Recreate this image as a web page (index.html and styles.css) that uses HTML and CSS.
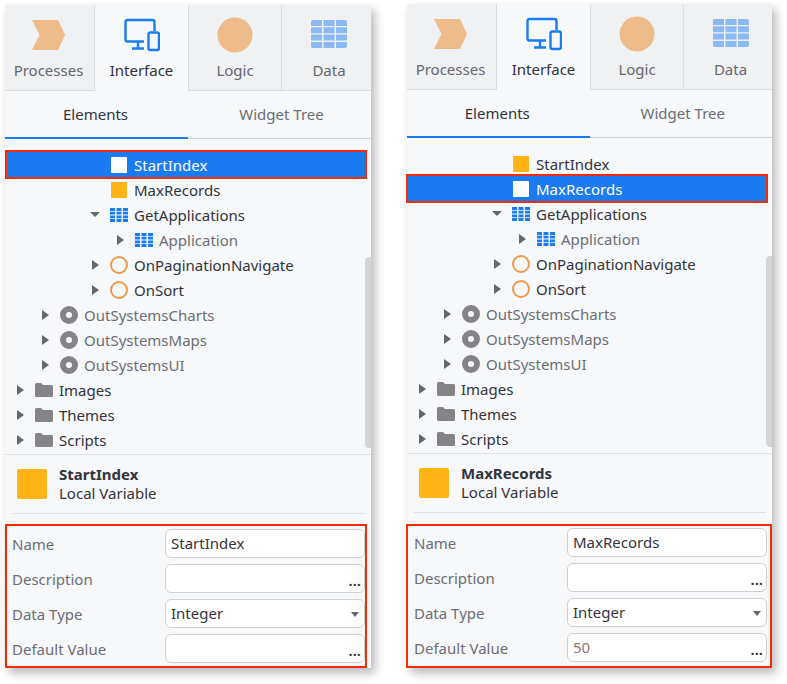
FILE: index.html
```html
<!DOCTYPE html>
<html>
<head>
<meta name="viewport" content="width=device-width, initial-scale=1">
<link rel="stylesheet" href="styles.css">
</head>
<body>

<svg class="defs" width="0" height="0">
  <symbol id="table" viewBox="0 0 18 14">
    <path d="M0 0h5v2.900H0zM6.500 0h5v2.900h-5zM13 0h5v2.900h-5zM0 3.700h5v2.900H0zM6.500 3.700h5v2.900h-5zM13 3.700h5v2.900h-5zM0 7.400h5v2.900H0zM6.500 7.400h5v2.900h-5zM13 7.400h5v2.900h-5zM0 11.100h5V14H0zM6.500 11.100h5V14h-5zM13 11.100h5V14h-5z"/>
  </symbol>
  <symbol id="folder" viewBox="0 0 18 14">
    <path d="M0 1.500Q0 0 1.500 0h4.500l2 2h8.500Q18 2 18 3.500v9Q18 14 16.500 14h-15Q0 14 0 12.500z"/>
  </symbol>
</svg>

<div class="panel panel-left">
  <div class="top-tabs">
    <div class="top-tab tab-first">
      <svg class="tab-icon" viewBox="0 0 36 32"><path d="M1 1h26l7 15-7 15H1l7.500-15z" fill="#eebb8b"/></svg>
      <span>Processes</span>
    </div>
    <div class="top-tab active">
      <svg class="tab-icon" viewBox="0 0 36 32" fill="none" stroke="#1a7cf0" stroke-width="2.400"><path d="M20 22.500H3.500q-2 0-2-2V3q0-2 2-2h25q2 0 2 2v9"/><path d="M14 23v6M8 29.500h12" /><rect x="24.500" y="13.500" width="10.500" height="17.500" rx="2"/></svg>
      <span>Interface</span>
    </div>
    <div class="top-tab">
      <svg class="tab-icon" viewBox="0 0 36 36"><circle cx="18" cy="18" r="17.500" fill="#eebb8b"/></svg>
      <span>Logic</span>
    </div>
    <div class="top-tab tab-last">
      <svg class="tab-icon" viewBox="0 0 36 30" fill="#8ab9f3"><path d="M0 2q0-2 2-2h9v6H0zM12.500 0h11v6h-11zM25 0h9q2 0 2 2v4H25zM0 7.300h11v6H0zM12.500 7.300h11v6h-11zM25 7.300h11v6H25zM0 14.600h11v6H0zM12.500 14.600h11v6h-11zM25 14.600h11v6H25zM0 22h11v6H2q-2 0-2-2zM12.500 22h11v6h-11zM25 22h11v4q0 2-2 2h-9z"/></svg>
      <span>Data</span>
    </div>
  </div>
  <div class="sub-tabs">
    <div class="sub-tab active">Elements</div>
    <div class="sub-tab">Widget Tree</div>
  </div>
  <div class="tree">
    <div class="row lvl3 selected"><i class="arrow"></i><i class="var white"></i><span>StartIndex</span></div>
    <div class="row lvl3"><i class="arrow"></i><i class="var"></i><span>MaxRecords</span></div>
    <div class="row lvl3"><i class="arrow down"></i><svg class="ico blue"><use href="#table"/></svg><span>GetApplications</span></div>
    <div class="row lvl4 dim"><i class="arrow right"></i><svg class="ico blue"><use href="#table"/></svg><span>Application</span></div>
    <div class="row lvl3"><i class="arrow right"></i><i class="ring"></i><span>OnPaginationNavigate</span></div>
    <div class="row lvl3"><i class="arrow right"></i><i class="ring"></i><span>OnSort</span></div>
    <div class="row lvl1 dim"><i class="arrow right"></i><i class="dot"></i><span>OutSystemsCharts</span></div>
    <div class="row lvl1 dim"><i class="arrow right"></i><i class="dot"></i><span>OutSystemsMaps</span></div>
    <div class="row lvl1 dim"><i class="arrow right"></i><i class="dot"></i><span>OutSystemsUI</span></div>
    <div class="row lvl0"><i class="arrow right"></i><svg class="ico grey"><use href="#folder"/></svg><span>Images</span></div>
    <div class="row lvl0"><i class="arrow right"></i><svg class="ico grey"><use href="#folder"/></svg><span>Themes</span></div>
    <div class="row lvl0"><i class="arrow right"></i><svg class="ico grey"><use href="#folder"/></svg><span>Scripts</span></div>
    <div class="scrollbar"></div>
  </div>
  <div class="summary">
    <div class="summary-swatch"></div>
    <div>
      <div class="summary-name">StartIndex</div>
      <div class="summary-type">Local Variable</div>
    </div>
  </div>
  <div class="props">
    <div class="prop"><label>Name</label><div class="field">StartIndex</div></div>
    <div class="prop"><label>Description</label><div class="field"><b class="more">...</b></div></div>
    <div class="prop"><label>Data Type</label><div class="field">Integer<i class="caret"></i></div></div>
    <div class="prop"><label>Default Value</label><div class="field"><b class="more">...</b></div></div>
  </div>
</div>

<div class="panel panel-right">
  <div class="top-tabs">
    <div class="top-tab tab-first">
      <svg class="tab-icon" viewBox="0 0 36 32"><path d="M1 1h26l7 15-7 15H1l7.500-15z" fill="#eebb8b"/></svg>
      <span>Processes</span>
    </div>
    <div class="top-tab active">
      <svg class="tab-icon" viewBox="0 0 36 32" fill="none" stroke="#1a7cf0" stroke-width="2.400"><path d="M20 22.500H3.500q-2 0-2-2V3q0-2 2-2h25q2 0 2 2v9"/><path d="M14 23v6M8 29.500h12" /><rect x="24.500" y="13.500" width="10.500" height="17.500" rx="2"/></svg>
      <span>Interface</span>
    </div>
    <div class="top-tab">
      <svg class="tab-icon" viewBox="0 0 36 36"><circle cx="18" cy="18" r="17.500" fill="#eebb8b"/></svg>
      <span>Logic</span>
    </div>
    <div class="top-tab tab-last">
      <svg class="tab-icon" viewBox="0 0 36 30" fill="#8ab9f3"><path d="M0 2q0-2 2-2h9v6H0zM12.500 0h11v6h-11zM25 0h9q2 0 2 2v4H25zM0 7.300h11v6H0zM12.500 7.300h11v6h-11zM25 7.300h11v6H25zM0 14.600h11v6H0zM12.500 14.600h11v6h-11zM25 14.600h11v6H25zM0 22h11v6H2q-2 0-2-2zM12.500 22h11v6h-11zM25 22h11v4q0 2-2 2h-9z"/></svg>
      <span>Data</span>
    </div>
  </div>
  <div class="sub-tabs">
    <div class="sub-tab active">Elements</div>
    <div class="sub-tab">Widget Tree</div>
  </div>
  <div class="tree">
    <div class="row lvl3"><i class="arrow"></i><i class="var"></i><span>StartIndex</span></div>
    <div class="row lvl3 selected"><i class="arrow"></i><i class="var white"></i><span>MaxRecords</span></div>
    <div class="row lvl3"><i class="arrow down"></i><svg class="ico blue"><use href="#table"/></svg><span>GetApplications</span></div>
    <div class="row lvl4 dim"><i class="arrow right"></i><svg class="ico blue"><use href="#table"/></svg><span>Application</span></div>
    <div class="row lvl3"><i class="arrow right"></i><i class="ring"></i><span>OnPaginationNavigate</span></div>
    <div class="row lvl3"><i class="arrow right"></i><i class="ring"></i><span>OnSort</span></div>
    <div class="row lvl1 dim"><i class="arrow right"></i><i class="dot"></i><span>OutSystemsCharts</span></div>
    <div class="row lvl1 dim"><i class="arrow right"></i><i class="dot"></i><span>OutSystemsMaps</span></div>
    <div class="row lvl1 dim"><i class="arrow right"></i><i class="dot"></i><span>OutSystemsUI</span></div>
    <div class="row lvl0"><i class="arrow right"></i><svg class="ico grey"><use href="#folder"/></svg><span>Images</span></div>
    <div class="row lvl0"><i class="arrow right"></i><svg class="ico grey"><use href="#folder"/></svg><span>Themes</span></div>
    <div class="row lvl0"><i class="arrow right"></i><svg class="ico grey"><use href="#folder"/></svg><span>Scripts</span></div>
    <div class="scrollbar"></div>
  </div>
  <div class="summary">
    <div class="summary-swatch"></div>
    <div>
      <div class="summary-name">MaxRecords</div>
      <div class="summary-type">Local Variable</div>
    </div>
  </div>
  <div class="props">
    <div class="prop"><label>Name</label><div class="field">MaxRecords</div></div>
    <div class="prop"><label>Description</label><div class="field"><b class="more">...</b></div></div>
    <div class="prop"><label>Data Type</label><div class="field">Integer<i class="caret"></i></div></div>
    <div class="prop"><label>Default Value</label><div class="field default">50<b class="more">...</b></div></div>
  </div>
</div>

</body>
</html>
```

FILE: styles.css
```css
* {
  box-sizing: border-box;
}

html, body {
  height: 100%;
}

body {
  margin: 0;
  padding: 4px 0 0 5px;
  display: flex;
  align-items: flex-start;
  gap: 36px;
  background: #fff;
  font-family: "Noto Sans", sans-serif;
  font-size: 15px;
  color: #33333b;
  overflow: hidden;
}

.defs {
  position: absolute;
}

.panel {
  width: 366px;
  height: 663px;
  background: #f6f8fa;
  box-shadow: 4px 5px 9px rgba(0, 0, 0, 0.28);
  flex: none;
}

.panel-left {
  margin-top: 1px;
}

.panel-right {
  width: 365px;
  height: 664px;
}

/* top tabs */
.top-tabs {
  display: flex;
  height: 86px;
}

.top-tab {
  width: 93px;
  padding-top: 12px;
  display: flex;
  flex-direction: column;
  align-items: center;
  background: #f0f1f3;
  border-bottom: 1px solid #dcdde0;
  border-right: 1px solid #dcdde0;
  color: #66666e;
}

.tab-first {
  width: 90px;
  padding-right: 2px;
}

.tab-last {
  flex: 1;
  border-right: 0;
  padding-left: 5px;
}

.top-tab.active {
  background: #f6f8fa;
  border-bottom: 0;
  border-left: 1px solid #dcdde0;
  color: #33333b;
  margin-left: -1px;
  width: 95px;
}

.tab-icon {
  width: 36px;
  height: 36px;
  margin-bottom: 7px;
  flex: none;
}

.top-tab span {
  line-height: 20px;
}

/* sub tabs */
.sub-tabs {
  display: flex;
  height: 48px;
  border-bottom: 1px solid #cfd0d3;
}

.sub-tab {
  width: 183px;
  padding-left: 4px;
  text-align: center;
  line-height: 47px;
  color: #6d6d75;
}

.sub-tab.active {
  color: #33333b;
  height: 48px;
  padding: 0 2px 0 0;
  border-bottom: 2px solid #1a7cf0;
}

/* tree */
.tree {
  position: relative;
  height: 316px;
  padding-top: 13px;
  border-bottom: 1px solid #e0e1e3;
}

.row {
  height: 25px;
  display: flex;
  align-items: center;
  white-space: nowrap;
}

.row.dim {
  color: #6d6d75;
}

.lvl0 { padding-left: 9px; }
.lvl1 { padding-left: 34px; }
.lvl3 { padding-left: 84px; }
.lvl4 { padding-left: 109px; }

.row.selected {
  height: 29px;
  margin: -2px 4px -2px 0;
  background: #1a7cf0;
  border: 2px solid #f42c04;
  color: #fff;
  padding: 1px 0 0 82px;
}

.panel-right .row.selected {
  margin-left: -1px;
  padding-left: 83px;
}

.arrow {
  width: 12px;
  height: 12px;
  margin-right: 9px;
  flex: none;
}

.arrow.right {
  border-style: solid;
  border-width: 5px 0 5px 7px;
  border-color: transparent transparent transparent #66666e;
  width: 0;
  height: 0;
  margin: 0 11px 0 3px;
}

.arrow.down {
  border-style: solid;
  border-width: 5px 5px 0;
  border-color: #66666e transparent transparent;
  width: 0;
  height: 0;
  margin: 0 10px 0 1px;
}

.row span {
  margin-left: 6px;
}

.ico {
  width: 18px;
  height: 14px;
  flex: none;
}

.ico.blue { fill: #1a7cf0; }
.ico.grey { fill: #838388; }

.var {
  width: 16px;
  height: 16px;
  margin: 0 1px;
  border-radius: 1px;
  background: #ffb517;
  flex: none;
}

.var.white {
  background: #fff;
}

.ring {
  width: 18px;
  height: 18px;
  border: 2px solid #ee9a4d;
  border-radius: 50%;
  flex: none;
}

.dot {
  width: 18px;
  height: 18px;
  border: 6px solid #838388;
  border-radius: 50%;
  background: #f6f8fa;
  flex: none;
}

.scrollbar {
  position: absolute;
  right: 0;
  top: 118px;
  width: 6px;
  height: 191px;
  background: #d4d5d8;
  border-radius: 4px 0 0 4px;
}

/* summary */
.summary {
  display: flex;
  gap: 12px;
  margin: 0 6px 0 7px;
  padding: 10px 0 0 5px;
  height: 59px;
  border-bottom: 1px solid #e0e1e3;
  line-height: 19px;
}

.summary-swatch {
  width: 30px;
  height: 30px;
  margin-top: 4px;
  border-radius: 2px;
  background: #ffb517;
}

.summary-name {
  font-weight: 700;
}

/* properties */
.props {
  margin: 10px 4px 0 0;
  height: 144px;
  border: 2px solid #f42c04;
  padding: 3px 0 0 5px;
}

.panel-right .props {
  margin: 11px 0 0 -1px;
  padding: 2px 0 0 6px;
}

.prop {
  display: flex;
  align-items: center;
  height: 29px;
  margin-bottom: 6px;
}

.prop label {
  width: 153px;
  color: #6d6d75;
}

.field {
  position: relative;
  width: 200px;
  height: 29px;
  line-height: 27px;
  padding-left: 5px;
  background: #fff;
  border: 1px solid #cfd0d3;
  border-radius: 6px;
}

.field.default {
  color: #8c7b74;
}

.more {
  position: absolute;
  right: 3px;
  bottom: 6px;
  line-height: 12px;
  font-size: 15px;
  font-weight: 600;
  color: #33333b;
}

.caret {
  position: absolute;
  right: 5px;
  top: 12px;
  border-style: solid;
  border-width: 5px 4px 0;
  border-color: #66666e transparent transparent;
}
```
